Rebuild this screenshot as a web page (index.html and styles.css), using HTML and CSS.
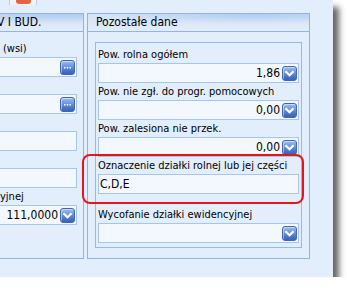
FILE: index.html
```html
<!DOCTYPE html>
<html lang="pl">
<head>
<meta charset="utf-8">
<link rel="stylesheet" href="styles.css">
</head>
<body>
<div class="window">
  <div class="topbar"><div class="tabstub"><span class="tabmark"></span></div></div>
  <div class="groups">
    <section class="group group-left">
      <div class="ghead ghead-left">V I BUD.</div>
      <div class="lbody">
        <div class="field">
          <div class="label label-wsi">(wsi)</div>
          <div class="input"><span class="btn"><svg width="13" height="13" viewBox="0 0 13 13"><rect x="3" y="6" width="1.5" height="1.5" fill="#fff"/><rect x="5.75" y="6" width="1.5" height="1.5" fill="#fff"/><rect x="8.5" y="6" width="1.5" height="1.5" fill="#fff"/></svg></span></div>
        </div>
        <div class="field">
          <div class="label"></div>
          <div class="input"><span class="btn"><svg width="13" height="13" viewBox="0 0 13 13"><rect x="3" y="6" width="1.5" height="1.5" fill="#fff"/><rect x="5.75" y="6" width="1.5" height="1.5" fill="#fff"/><rect x="8.5" y="6" width="1.5" height="1.5" fill="#fff"/></svg></span></div>
        </div>
        <div class="field">
          <div class="label"></div>
          <div class="input"></div>
        </div>
        <div class="field">
          <div class="label"></div>
          <div class="input"></div>
        </div>
        <div class="field">
          <div class="label label-cut">yjnej</div>
          <div class="input"><span class="val">111,0000</span><span class="btn"><svg width="13" height="13" viewBox="0 0 13 13"><polyline points="3.2,5 6.5,8.3 9.8,5" fill="none" stroke="#fff" stroke-width="2.2" stroke-linecap="square"/></svg></span></div>
        </div>
      </div>
    </section>
    <section class="group group-right">
      <div class="ghead">Pozostałe dane</div>
      <div class="rbody">
        <div class="inner">
          <div class="field">
            <div class="label">Pow. rolna ogółem</div>
            <div class="input"><span class="val">1,86</span><span class="btn"><svg width="13" height="13" viewBox="0 0 13 13"><polyline points="3.2,5 6.5,8.3 9.8,5" fill="none" stroke="#fff" stroke-width="2.2" stroke-linecap="square"/></svg></span></div>
          </div>
          <div class="field">
            <div class="label">Pow. nie zgł. do progr. pomocowych</div>
            <div class="input"><span class="val">0,00</span><span class="btn"><svg width="13" height="13" viewBox="0 0 13 13"><polyline points="3.2,5 6.5,8.3 9.8,5" fill="none" stroke="#fff" stroke-width="2.2" stroke-linecap="square"/></svg></span></div>
          </div>
          <div class="field">
            <div class="label">Pow. zalesiona nie przek.</div>
            <div class="input"><span class="val">0,00</span><span class="btn"><svg width="13" height="13" viewBox="0 0 13 13"><polyline points="3.2,5 6.5,8.3 9.8,5" fill="none" stroke="#fff" stroke-width="2.2" stroke-linecap="square"/></svg></span></div>
          </div>
          <div class="field field-marked">
            <div class="label">Oznaczenie działki rolnej lub jej części</div>
            <div class="input input-text"><span class="val">C,D,E</span></div>
            <div class="highlight"></div>
          </div>
          <div class="field field-last">
            <div class="label">Wycofanie działki ewidencyjnej</div>
            <div class="input"><span class="btn"><svg width="13" height="13" viewBox="0 0 13 13"><polyline points="3.2,5 6.5,8.3 9.8,5" fill="none" stroke="#fff" stroke-width="2.2" stroke-linecap="square"/></svg></span></div>
          </div>
        </div>
      </div>
    </section>
  </div>
</div>
</body>
</html>
```

FILE: styles.css
```css
* { box-sizing: border-box; }

body {
  margin: 0;
  background: #ffffff;
  font-family: "DejaVu Sans Condensed", "Liberation Sans", Arial, sans-serif;
  font-size: 11px;
  color: #000;
}

.window {
  width: 333px;
  height: 277px;
  background: #e3eefc;
  box-shadow: 6px 7px 6px rgba(0, 0, 0, 0.6);
  overflow: hidden;
}

.topbar {
  height: 13px;
}

.tabstub {
  margin-left: 9px;
  width: 28px;
  height: 5px;
  border-left: 1px solid #b9d0f1;
  border-right: 1px solid #b9d0f1;
  background: #edf4fe;
  display: flex;
  justify-content: center;
}

.tabmark {
  width: 15px;
  height: 4px;
  background: #e8643e;
  border-radius: 0 0 3px 3px;
}

.groups {
  display: flex;
  gap: 3px;
  height: 246px;
}

.group {
  border: 1px solid #8fb4e9;
  display: flex;
  flex-direction: column;
}

.group-left {
  width: 84px;
  border-left: none;
}

.group-right {
  width: 223px;
}

.ghead {
  height: 18px;
  border-bottom: 1px solid #8fb4e9;
  background:
    radial-gradient(ellipse 150px 10px at 75% 0%, rgba(160, 192, 238, 0.7), rgba(160, 192, 238, 0)),
    linear-gradient(#d3e2f7, #e3edfb);
  line-height: 17px;
  font-size: 12px;
  padding-left: 8px;
  white-space: nowrap;
  overflow: hidden;
}

.ghead-left {
  padding-left: 0;
  text-indent: -3px;
}

.lbody {
  padding: 8px 6px 0 0;
}

.rbody {
  padding: 10px 7px;
  flex: 1;
  display: flex;
}

.inner {
  flex: 1;
  border: 1px solid #97b9ea;
  padding: 3px 2px 4px 2px;
}

.field {
  display: flex;
  flex-direction: column;
}

.field-marked {
  position: relative;
}

.field-last {
  margin-top: 12px;
}

.label {
  height: 17px;
  line-height: 17px;
  white-space: nowrap;
}

.label-wsi {
  padding-left: 3px;
}

.lbody .input {
  margin-left: -1px;
}

.input {
  height: 20px;
  border: 1px solid #a7c4ec;
  background: #f3f8fe;
  display: flex;
  align-items: center;
  justify-content: flex-end;
  padding-right: 1px;
}

.input-text {
  justify-content: flex-start;
  padding-left: 1px;
}

.val {
  margin-right: 2px;
  font-size: 12px;
}

.input-text .val {
  margin-right: 0;
}

.btn {
  width: 15px;
  height: 15px;
  border: 1px solid #4266b0;
  border-radius: 3px;
  background: linear-gradient(#9cbdf2, #6892dd 45%, #4470c6 80%, #3b63b6);
  box-shadow: inset 1px 1px 0 rgba(255, 255, 255, 0.45);
  display: flex;
  align-items: center;
  justify-content: center;
}

.btn svg {
  display: block;
}

.highlight {
  position: absolute;
  top: -3px;
  left: -16px;
  right: -5px;
  bottom: -10px;
  border: 2px solid #e3161c;
  border-radius: 8px;
}
```
